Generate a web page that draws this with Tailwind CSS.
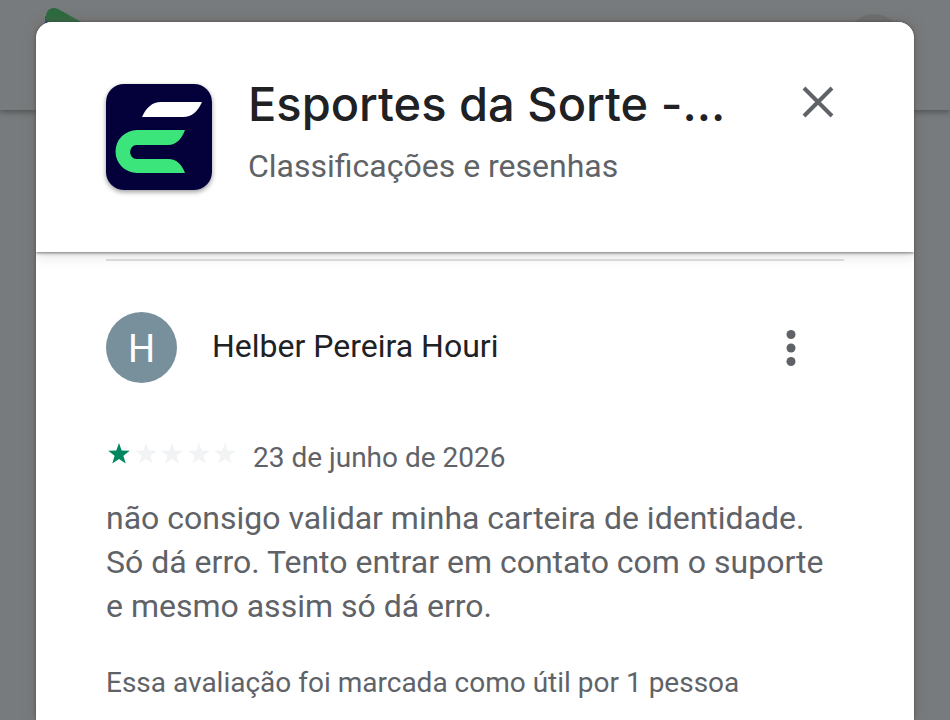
<!DOCTYPE html>
<html lang="pt-BR">
<head>
    <meta charset="UTF-8">
    <meta name="viewport" content="width=device-width, initial-scale=1.0">
    <title>Esportes da Sorte - Classificações e resenhas</title>
    <script src="https://cdn.jsdelivr.net/npm/@tailwindcss/browser@4"></script>
</head>
<body class="h-screen overflow-hidden bg-[#787b7d] font-['Roboto',sans-serif] text-[#5f6368]">
    <!-- Dimmed page behind the dialog -->
    <div class="absolute inset-x-0 top-0 flex h-[110px] items-start justify-between bg-[#787b7d] pl-11 pr-12 pt-2 shadow-[0_2px_6px_rgba(0,0,0,0.35)]">
        <svg class="h-14 w-14" viewBox="0 0 56 56" aria-hidden="true">
            <path d="M1 8v40l24-20z" fill="#2c4f86"/>
            <path d="M2 12C1 2 7-2 14 1l36 20-12 10z" fill="#2b6a3e"/>
        </svg>
        <div class="mt-1.5 h-14 w-14 rounded-full bg-[#6e6f70]"></div>
    </div>

    <div class="relative h-full px-9 pt-[22px]">
        <div role="dialog" aria-labelledby="dialog-title" class="flex h-full flex-col overflow-hidden rounded-t-2xl bg-white shadow-[0_0_12px_rgba(100,90,85,0.6),0_0_3px_rgba(0,0,0,0.4)]">
            <header class="relative flex items-start bg-white px-[70px] pb-[62px] pt-[62px] shadow-[0_1px_3px_rgba(0,0,0,0.5),0_3px_14px_rgba(0,0,0,0.14)]">
                <svg class="h-[106px] w-[106px] shrink-0 rounded-[18px] shadow-[0_2px_5px_rgba(0,0,0,0.4)]" viewBox="0 0 106 106" role="img" aria-label="Esportes da Sorte">
                    <rect width="106" height="106" fill="#04003a"/>
                    <path d="M36 33c4-9 10-15 19-15h41c-4 9-10 15-19 15z" fill="#fff"/>
                    <path d="M79 46H31a21.500 21.500 0 0 0 0 43h48c-3-8-8-14-17-14H31c-9 0-9-14 0-14h31c9 0 14-7 17-15z" fill="#3ce57c"/>
                </svg>
                <div class="ml-9 min-w-0 flex-1">
                    <h1 id="dialog-title" class="whitespace-nowrap font-['Inter',sans-serif] text-[47px] font-medium leading-[40px] text-[#202124]">Esportes da Sorte -…</h1>
                    <p class="mt-5 text-[32px] leading-[44px]">Classificações e resenhas</p>
                </div>
                <button type="button" aria-label="Fechar" class="mr-2.5 mt-0.5">
                    <svg class="h-8 w-8" viewBox="0 0 32 32" fill="none" stroke="#5f6368" stroke-width="4"><path d="M2 2l28 28M30 2L2 30"/></svg>
                </button>
            </header>

            <main class="px-[70px] pt-[7px]">
                <hr class="border-t-2 border-[#e0e1e2]">
                <div class="mt-[51px] flex items-center">
                    <div class="flex h-[71px] w-[71px] items-center justify-center rounded-full bg-[#78909c] pt-0.5 text-[38px] leading-none text-white">H</div>
                    <h2 class="mb-1 ml-[35px] flex-1 text-[32px] leading-[44px] text-[#202124]">Helber Pereira Houri</h2>
                    <button type="button" aria-label="Mais opções" class="mr-[35px]">
                        <svg class="h-9 w-9" viewBox="0 0 36 36" fill="#5f6368"><circle cx="18" cy="4.500" r="4.500"/><circle cx="18" cy="18" r="4.500"/><circle cx="18" cy="31.500" r="4.500"/></svg>
                    </button>
                </div>

                <div class="mt-[53px] flex items-center">
                    <svg class="mb-2 h-6 w-[132px]" viewBox="0 0 132 24" role="img" aria-label="1 de 5 estrelas">
                        <defs><path id="star" d="M0-11l2.700 7.600 8.100.2-6.400 4.900 2.300 7.700L0 4.900l-6.700 4.500 2.300-7.700-6.400-4.900 8.100-.2z"/></defs>
                        <use href="#star" x="13" y="12" fill="#01875f"/>
                        <g fill="#f1f3f4"><use href="#star" x="40" y="12"/><use href="#star" x="66" y="12"/><use href="#star" x="93" y="12"/><use href="#star" x="119" y="12"/></g>
                    </svg>
                    <span class="ml-[15px] text-[28px] leading-[44px]">23 de junho de 2026</span>
                </div>

                <p class="mt-4 text-[32px] leading-[44px]">não consigo validar minha carteira de identidade. Só dá erro. Tento entrar em contato com o suporte e mesmo assim só dá erro.</p>
                <p class="mt-[33px] text-[28px] leading-[44px]">Essa avaliação foi marcada como útil por 1 pessoa</p>
            </main>
        </div>
    </div>
</body>
</html>
